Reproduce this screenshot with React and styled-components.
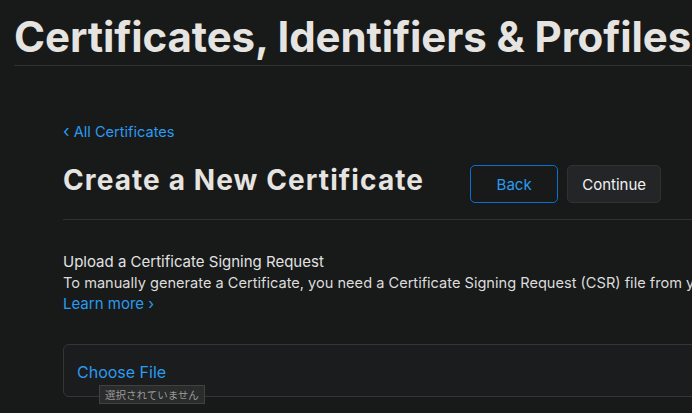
import React from 'react';
import styled, { createGlobalStyle } from 'styled-components';

const GlobalStyle = createGlobalStyle`
  html, body {
    margin: 0;
    padding: 0;
    background: #181919;
    overflow: hidden;
  }
  body {
    font-family: Inter, "Noto Sans", sans-serif;
    color: #e6e4e1;
  }
`;

function App() {
  return (
    <React.Fragment>
      <GlobalStyle />
      <Page>
        <Header>
          <PageTitle>Certificates, Identifiers &amp; Profiles</PageTitle>
        </Header>
        <Main>
          <BackLink href="#">
            <Chevron>‹</Chevron> All Certificates
          </BackLink>
          <TitleRow>
            <SectionTitle>Create a New Certificate</SectionTitle>
            <Actions>
              <Button variant="outline">Back</Button>
              <Button>Continue</Button>
            </Actions>
          </TitleRow>
          <Section>
            <Label>Upload a Certificate Signing Request</Label>
            <Description>
              To manually generate a Certificate, you need a Certificate Signing Request (CSR) file from your Mac.
            </Description>
            <LearnMore href="#">Learn more ›</LearnMore>
          </Section>
          <FileBox>
            <ChooseFile>Choose File</ChooseFile>
            <Tooltip>選択されていません</Tooltip>
          </FileBox>
        </Main>
      </Page>
    </React.Fragment>
  );
}

const Page = styled.div`
  width: 1000px;
  min-height: 100vh;
  padding-top: 13px;
`;
const Header = styled.header`
  margin-left: 14px;
  border-bottom: 1px solid #303131;
  padding-bottom: 4px;
`;
const PageTitle = styled.h1`
  margin: 0;
  font-size: 42px;
  line-height: 48px;
  font-weight: 700;
  letter-spacing: -0.1px;
  color: #e6e4e1;
`;
const Main = styled.main`
  margin-left: 63px;
  padding-top: 55px;
`;
const BackLink = styled.a`
  display: inline-block;
  font-size: 14.6px;
  line-height: 20px;
  color: #2b9bf0;
  text-decoration: none;
`;
const Chevron = styled.span`
  font-size: 17px;
`;
const TitleRow = styled.div`
  display: flex;
  align-items: flex-start;
  gap: 46px;
  margin-top: 19px;
  padding-bottom: 16px;
  border-bottom: 1px solid #303131;
`;
const SectionTitle = styled.h2`
  margin: 0;
  font-size: 28px;
  line-height: 38px;
  font-weight: 700;
  letter-spacing: 1.1px;
  color: #e6e4e1;
`;
const Actions = styled.div`
  display: flex;
  gap: 9px;
  margin-top: 4px;
`;
const Button = styled.button`
  box-sizing: border-box;
  height: 38px;
  padding: 0 14px;
  min-width: ${(p) => (p.variant === 'outline' ? '88px' : '94px')};
  border-radius: 5px;
  font-family: Inter, sans-serif;
  font-size: 15px;
  background: ${(p) => (p.variant === 'outline' ? 'transparent' : '#242527')};
  border: 1px solid ${(p) => (p.variant === 'outline' ? '#0a6fd0' : '#303133')};
  color: ${(p) => (p.variant === 'outline' ? '#2b9bf0' : '#f2f2f2')};
`;
const Section = styled.section`
  padding-top: 30px;
  display: flex;
  flex-direction: column;
  align-items: flex-start;
`;
const Label = styled.div`
  font-size: 15px;
  line-height: 23px;
  color: #e2e2e2;
`;
const Description = styled.div`
  font-size: 14.6px;
  line-height: 21px;
  color: #dcdcdc;
  white-space: nowrap;
`;
const LearnMore = styled.a`
  font-size: 15px;
  line-height: 20px;
  color: #2b9bf0;
  text-decoration: none;
`;
const FileBox = styled.div`
  box-sizing: border-box;
  position: relative;
  margin-top: 30px;
  height: 53px;
  border: 1px solid #343536;
  border-radius: 6px;
  background: #1b1c1d;
  display: flex;
  align-items: center;
  padding: 2px 13px 0;
`;
const ChooseFile = styled.span`
  font-size: 16px;
  color: #2b9bf0;
`;
const Tooltip = styled.div`
  position: absolute;
  z-index: 1;
  left: 35px;
  top: 40px;
  padding: 1px 5px;
  white-space: nowrap;
  font-family: "Noto Sans CJK JP", sans-serif;
  font-size: 10.5px;
  line-height: 15px;
  color: #9a9a9a;
  background: #2a2b2b;
  border: 1px solid #404141;
`;

export default App;
